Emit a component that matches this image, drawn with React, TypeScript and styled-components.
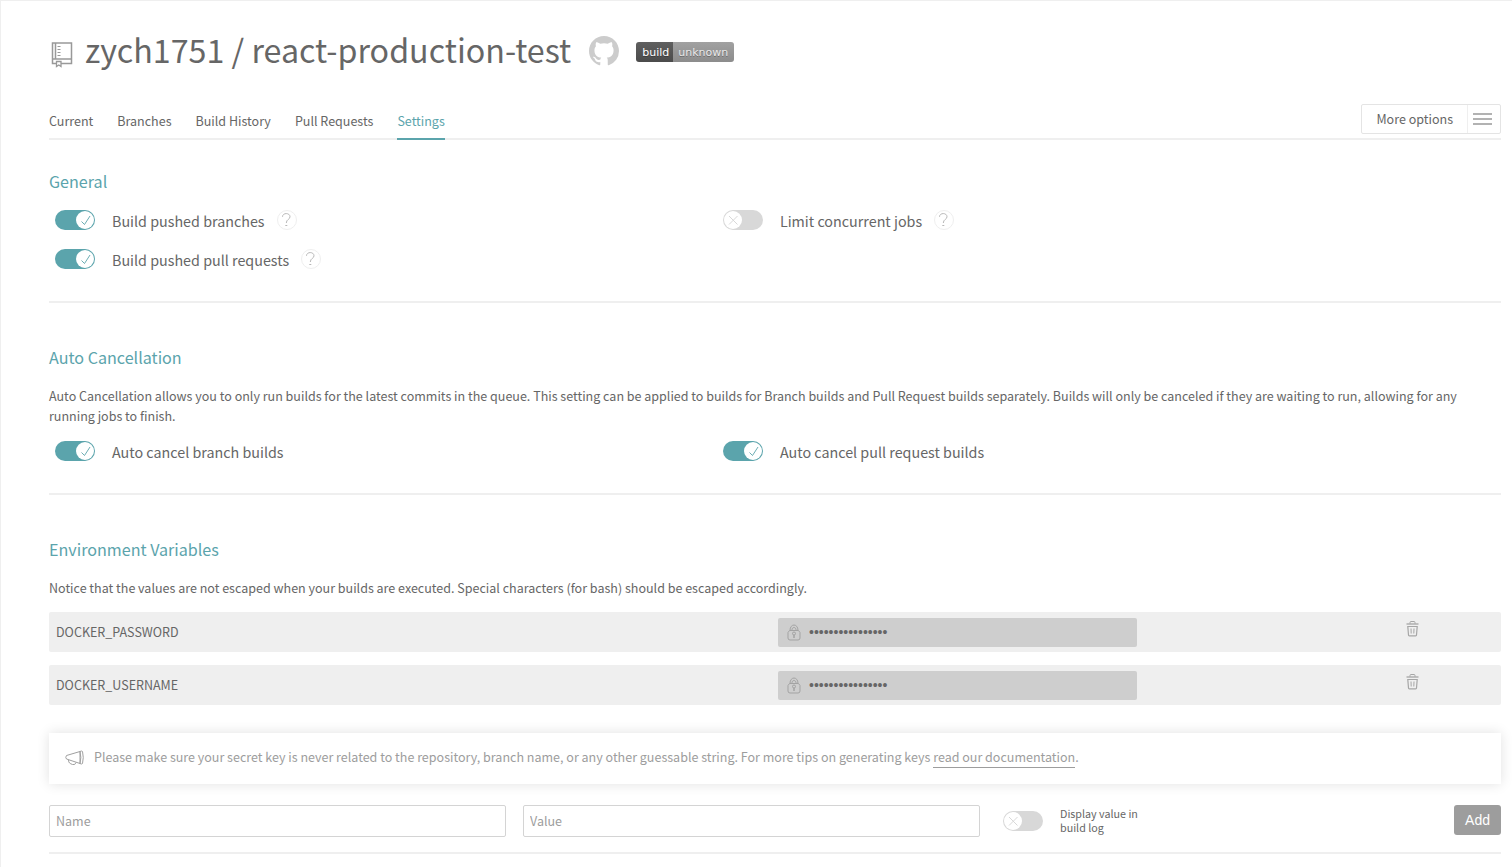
import React, { useState } from 'react';
import styled, { createGlobalStyle } from 'styled-components';

const teal = '#5ba4ac';
const text = '#666';
const muted = '#9d9d9d';
const line = '#efefef';

const GlobalStyle = createGlobalStyle`
  *, *::before, *::after { box-sizing: border-box; }
  body {
    margin: 0;
    background: #fff;
    color: ${text};
    font: 14px/20px "Noto Sans CJK SC", "Open Sans", sans-serif;
    font-size-adjust: 0.486;
  }
  button, input { font: inherit; font-size-adjust: inherit; color: inherit; margin: 0; }
  h1, h2, p, ul { margin: 0; padding: 0; font-weight: 400; }
`;

const Page = styled.main`
  min-height: 100vh;
  border: solid ${line};
  border-width: 1px 0 0 1px;
  padding: 24px 11px 12px 48px;
`;

const Header = styled.header`
  display: flex;
  align-items: center;
  margin-bottom: 31px;
`;

const RepoIcon = styled.svg`
  flex: none;
  width: 24px;
  height: 28px;
  margin: 10px 12px 0 0;
`;

const Title = styled.h1`
  font-size: 36px;
  line-height: 48px;
`;

const GithubLink = styled.a`
  display: block;
  height: 32px;
  margin: 4px 16px 0 17px;
`;

const Badge = styled.button`
  display: flex;
  height: 20px;
  margin-top: 6px;
  padding: 0;
  border: 0;
  border-radius: 3px;
  overflow: hidden;
  font: 11px/20px "DejaVu Sans", sans-serif;
  font-size-adjust: none;
  color: #fff;
  text-shadow: 0 1px 0 rgba(1, 1, 1, 0.3);
`;

const BadgePart = styled.span<{ $tone: 'dark' | 'light' }>`
  padding: 1px ${(p) => (p.$tone === 'dark' ? 4 : 6)}px 0 ${(p) => (p.$tone === 'dark' ? 6 : 5)}px;
  color: ${(p) => (p.$tone === 'dark' ? '#fff' : '#e9e9e9')};
  background: ${(p) =>
    p.$tone === 'dark' ? 'linear-gradient(#5f5f5f, #4b4b4b)' : 'linear-gradient(#a1a1a1, #8c8c8c)'};
`;

const NavBar = styled.nav`
  display: flex;
  align-items: flex-end;
  justify-content: space-between;
  border-bottom: 2px solid ${line};
`;

const Tabs = styled.div`
  display: flex;
  gap: 24px;
  margin-bottom: -2px;
`;

const Tab = styled.a<{ $active?: boolean }>`
  padding-bottom: 7px;
  border-bottom: 2px solid ${(p) => (p.$active ? teal : 'transparent')};
  color: ${(p) => (p.$active ? teal : text)};
  text-decoration: none;
`;

const OptionsButton = styled.button`
  display: flex;
  height: 30px;
  margin-bottom: 4px;
  padding: 0;
  border: 1px solid #e4e4e4;
  border-radius: 2px;
  background: #fff;
  line-height: 28px;
`;

const OptionsLabel = styled.span`
  padding: 0 14px;
`;

const OptionsIcon = styled.span`
  display: flex;
  align-items: center;
  height: 28px;
  padding: 0 8px 0 5px;
  border-left: 1px solid ${line};
`;

const Section = styled.section<{ $first?: boolean }>`
  padding: ${(p) => (p.$first ? 29 : 42)}px 0 32px;
  border-bottom: 2px solid ${line};
  &:last-of-type { padding-bottom: 15px; }
`;

const Heading = styled.h2`
  margin-bottom: 17px;
  font-size: 18px;
  line-height: 24px;
  color: ${teal};
`;

const Switches = styled.div`
  display: grid;
  grid-template-columns: 46% 1fr;
  gap: 19px 0;
  margin-top: 15px;
`;

const SwitchCell = styled.div`
  display: flex;
  align-items: center;
  height: 20px;
  padding-left: 6px;
`;

const SwitchLabel = styled.label<{ $small?: boolean }>`
  display: flex;
  align-items: center;
  gap: 17px;
  font-size: ${(p) => (p.$small ? 12 : 16)}px;
  line-height: ${(p) => (p.$small ? 14 : 20)}px;
  cursor: pointer;
`;

const Track = styled.span<{ $on: boolean }>`
  display: flex;
  flex: none;
  justify-content: ${(p) => (p.$on ? 'flex-end' : 'flex-start')};
  width: 40px;
  height: 20px;
  padding: 1px;
  border-radius: 10px;
  background: ${(p) => (p.$on ? teal : '#d8d8d8')};
  color: ${(p) => (p.$on ? teal : '#d8d8d8')};
`;

const Checkbox = styled.input`
  position: absolute;
  width: 40px;
  height: 20px;
  opacity: 0;
  cursor: pointer;
`;

const Knob = styled.svg`
  width: 18px;
  height: 18px;
  border-radius: 50%;
  background: #fff;
`;

const LabelText = styled.span`
  padding-top: 2px;
`;

const Help = styled.button`
  display: flex;
  width: 20px;
  height: 20px;
  margin-left: 12px;
  padding: 0;
  border: 1px solid ${line};
  border-radius: 50%;
  background: #fff;
`;

const Variables = styled.ul`
  display: grid;
  gap: 13px;
  margin: 14px 0 28px;
  list-style: none;
`;

const Variable = styled.li`
  display: grid;
  grid-template-columns: 729fr 359fr 364fr;
  align-items: center;
  height: 40px;
  border-radius: 2px;
  background: ${line};
`;

const VariableName = styled.span`
  padding-left: 7px;
`;

const Secret = styled.label`
  display: flex;
  align-items: center;
  height: 29px;
  padding-left: 9px;
  border-radius: 2px;
  background: #cecece;
`;

const SecretInput = styled.input`
  flex: 1;
  min-width: 0;
  padding: 0 8px;
  border: 0;
  outline: 0;
  background: none;
  font-family: "Liberation Sans", Arial, sans-serif;
  font-size-adjust: none;
`;

const DeleteButton = styled.button`
  justify-self: center;
  height: 18px;
  margin: 0 0 6px 186px;
  padding: 0;
  border: 0;
  background: none;
`;

const Notice = styled.div`
  display: flex;
  align-items: center;
  gap: 10px;
  height: 51px;
  margin-bottom: 21px;
  padding: 0 16px 2px;
  background: #fff;
  color: ${muted};
  box-shadow: 0 0 12px rgba(0, 0, 0, 0.12);
`;

const NoticeText = styled.p`
  padding-bottom: 2px;
`;

const DocLink = styled.a`
  padding-bottom: 1px;
  border-bottom: 1px solid ${muted};
  color: ${muted};
  text-decoration: none;
`;

const Form = styled.form`
  display: grid;
  grid-template-columns: 457fr 457fr 504fr;
  gap: 17px;
`;

const Field = styled.input`
  min-width: 0;
  height: 32px;
  padding: 0 6px 2px;
  border: 1px solid #d4d4d4;
  border-radius: 2px;
  background: #fff;
  &::placeholder { color: ${muted}; opacity: 1; }
`;

const FormEnd = styled.div`
  display: flex;
  align-items: center;
  justify-content: space-between;
  padding-left: 6px;
`;

const SmallText = styled.span`
  width: 90px;
`;

const AddButton = styled.button`
  align-self: flex-start;
  height: 30px;
  padding: 0 11px;
  border: 0;
  border-radius: 3px;
  background: ${muted};
  color: #fff;
  font: 14px/30px "Liberation Sans", Arial, sans-serif;
  font-size-adjust: none;
`;

function Switch({ label, on, small }: { label: string; on?: boolean; small?: boolean }) {
  const [checked, setChecked] = useState(!!on);
  return (
    <SwitchLabel $small={small}>
      <Checkbox type="checkbox" checked={checked} onChange={() => setChecked(!checked)} />
      <Track $on={checked}>
        <Knob viewBox="0 0 18 18" fill="none" stroke="currentColor" aria-hidden="true">
          {checked ? (
            <path d="M5.500 10.500l3 3 5.500-8.500" strokeWidth=".9" />
          ) : (
            <path d="M5 5l8.500 8.500M13.500 5L5 13.500" />
          )}
        </Knob>
      </Track>
      {small ? <SmallText>{label}</SmallText> : <LabelText>{label}</LabelText>}
    </SwitchLabel>
  );
}

function HelpButton({ topic }: { topic: string }) {
  return (
    <Help type="button" aria-label={`Help: ${topic}`}>
      <svg width="18" height="18" viewBox="0 0 18 18" fill="none" stroke="#b8b8b8" aria-hidden="true">
        <path d="M4.500 5.800C4.500 1.500 12 1.500 12 5.800C12 8.500 8.300 8.300 8.300 12" />
        <path d="M7.300 14.500h2" />
      </svg>
    </Help>
  );
}

function LockIcon() {
  return (
    <svg width="14" height="17" viewBox="0 0 14 17" fill="none" stroke="#a3a3a3" aria-hidden="true">
      <path d="M3 6.500C3 -.8 11 -.8 11 6.500M2.500 6.500h9l1.500 2v5.500q0 2-2 2H3q-2 0-2-2V8.500z" />
      <path d="M5 6.500C4.500 2.500 9.500 2.500 9 6.500" />
      <circle cx="7" cy="9.500" r="1.500" />
      <path d="M7 11v3" strokeWidth="1.500" />
    </svg>
  );
}

function TrashIcon() {
  return (
    <svg width="13" height="17" viewBox="0 0 13 17" fill="none" stroke="#a6a6a6" aria-hidden="true">
      <path d="M.5 4h12" strokeWidth="1.300" />
      <path d="M4 3.700V2.500Q4 1.500 5 1.500h3q1 0 1 1v1.200" />
      <path d="M1.800 6.500h9.400l-.7 8.500q0 .8-.8.800H3.300q-.8 0-.8-.8z" strokeWidth="1.200" />
      <path d="M5 8.500l.2 5M8 8.500l-.2 5" />
    </svg>
  );
}

function EnvVariable({ name }: { name: string }) {
  return (
    <Variable>
      <VariableName>{name}</VariableName>
      <Secret>
        <LockIcon />
        <SecretInput type="text" readOnly value="••••••••••••••••" aria-label={`${name} value`} />
      </Secret>
      <DeleteButton type="button" aria-label={`Delete ${name}`}>
        <TrashIcon />
      </DeleteButton>
    </Variable>
  );
}

export default function App() {
  return (
    <>
      <GlobalStyle />
      <Page>
        <Header>
          <RepoIcon viewBox="0 0 24 28" fill="none" stroke="#999" strokeWidth="1.500" aria-hidden="true">
            <path d="M7 23.500H3.500V3h19v20.500H12M6.500 3v16M3.500 19h19" />
            <path d="M8.500 6.500h3M8.500 9.500h3M8.500 12.500h3M8.500 15.500h3" strokeWidth="1" />
            <path d="M7.500 21.500h4.500v5l-2.200-1.500-2.300 1.500z" strokeWidth="1.300" />
          </RepoIcon>
          <Title>zych1751 / react-production-test</Title>
          <GithubLink href="#" aria-label="GitHub">
            <svg width="32" height="32" viewBox="0 0 16 16" fill="#ccc" aria-hidden="true">
              <path d="M8 .5C3.860.5.5 3.860.5 8c0 3.310 2.150 6.120 5.130 7.110.370.070.510-.160.510-.360v-1.270c-2.090.450-2.530-1.010-2.530-1.010-.340-.870-.830-1.100-.830-1.100-.680-.470.050-.460.050-.460.750.050 1.150.770 1.150.770.670 1.150 1.760.820 2.190.630.070-.490.260-.820.470-1-1.660-.190-3.410-.830-3.410-3.710 0-.820.290-1.490.770-2.010-.080-.190-.330-.950.070-1.990 0 0 .630-.200 2.060.770a7.200 7.200 0 0 1 3.750 0c1.430-.970 2.060-.770 2.060-.770.410 1.040.150 1.800.080 1.990.480.520.770 1.190.770 2.010 0 2.890-1.760 3.520-3.430 3.710.270.230.510.690.510 1.390v2.060c0 .200.130.430.510.360A7.500 7.500 0 0 0 15.500 8C15.500 3.860 12.140.5 8 .5z" />
            </svg>
          </GithubLink>
          <Badge type="button">
            <BadgePart $tone="dark">build</BadgePart>
            <BadgePart $tone="light">unknown</BadgePart>
          </Badge>
        </Header>

        <NavBar>
          <Tabs>
            <Tab href="#">Current</Tab>
            <Tab href="#">Branches</Tab>
            <Tab href="#">Build History</Tab>
            <Tab href="#">Pull Requests</Tab>
            <Tab href="#" $active aria-current="page">Settings</Tab>
          </Tabs>
          <OptionsButton type="button">
            <OptionsLabel>More options</OptionsLabel>
            <OptionsIcon>
              <svg width="19" height="14" viewBox="0 0 19 14" stroke="#b2b2b2" strokeWidth="2" aria-hidden="true">
                <path d="M0 2h19M0 7h19M0 12h19" />
              </svg>
            </OptionsIcon>
          </OptionsButton>
        </NavBar>

        <Section $first>
          <Heading>General</Heading>
          <Switches>
            <SwitchCell>
              <Switch label="Build pushed branches" on />
              <HelpButton topic="Build pushed branches" />
            </SwitchCell>
            <SwitchCell>
              <Switch label="Limit concurrent jobs" />
              <HelpButton topic="Limit concurrent jobs" />
            </SwitchCell>
            <SwitchCell>
              <Switch label="Build pushed pull requests" on />
              <HelpButton topic="Build pushed pull requests" />
            </SwitchCell>
          </Switches>
        </Section>

        <Section>
          <Heading>Auto Cancellation</Heading>
          <p>
            Auto Cancellation allows you to only run builds for the latest commits in the queue. This setting can be
            applied to builds for Branch builds and Pull Request builds separately. Builds will only be canceled if they
            are waiting to run, allowing for any running jobs to finish.
          </p>
          <Switches>
            <SwitchCell>
              <Switch label="Auto cancel branch builds" on />
            </SwitchCell>
            <SwitchCell>
              <Switch label="Auto cancel pull request builds" on />
            </SwitchCell>
          </Switches>
        </Section>

        <Section>
          <Heading>Environment Variables</Heading>
          <p>
            Notice that the values are not escaped when your builds are executed. Special characters (for bash) should
            be escaped accordingly.
          </p>
          <Variables>
            <EnvVariable name="DOCKER_PASSWORD" />
            <EnvVariable name="DOCKER_USERNAME" />
          </Variables>
          <Notice>
            <svg width="19" height="16" viewBox="0 0 19 16" fill="none" stroke="#a0a0a0" aria-hidden="true">
              <path d="M15 1.500L1.500 5.500Q0 7.500 1.500 9L15 13.500z" />
              <path d="M15 1.500Q16.500.5 17.500 1.500Q19 7.500 17.500 13.500Q16.500 14.500 15 13.500Q16.700 7.500 15 1.500" />
              <path d="M3.500 10C3.500 13 5 13.500 7.500 14.500Q10 15.500 11 12.500" />
            </svg>
            <NoticeText>
              Please make sure your secret key is never related to the repository, branch name, or any other guessable
              string. For more tips on generating keys <DocLink href="#">read our documentation</DocLink>.
            </NoticeText>
          </Notice>
          <Form onSubmit={(e) => e.preventDefault()}>
            <Field type="text" placeholder="Name" aria-label="Name" />
            <Field type="text" placeholder="Value" aria-label="Value" />
            <FormEnd>
              <Switch label="Display value in build log" small />
              <AddButton type="submit">Add</AddButton>
            </FormEnd>
          </Form>
        </Section>
      </Page>
    </>
  );
}
